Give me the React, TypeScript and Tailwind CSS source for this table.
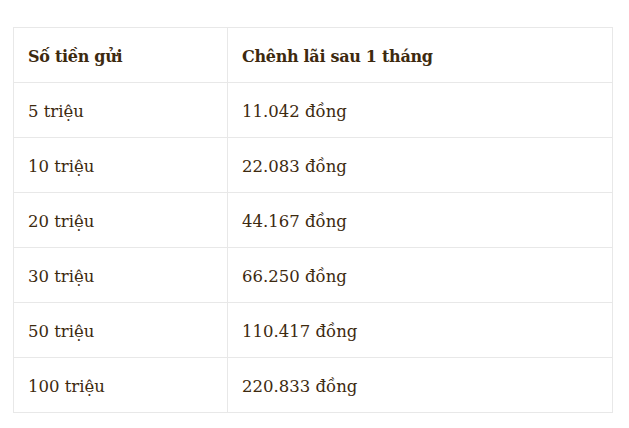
import React from "react";

const rows: [string, string][] = [
  ["5 triệu", "11.042 đồng"],
  ["10 triệu", "22.083 đồng"],
  ["20 triệu", "44.167 đồng"],
  ["30 triệu", "66.250 đồng"],
  ["50 triệu", "110.417 đồng"],
  ["100 triệu", "220.833 đồng"],
];

export default function App() {
  return (
    <div
      className="w-[629px] h-[428px] bg-white overflow-hidden text-[#3d2a0f]"
      style={{ fontFamily: '"DejaVu Serif", "Liberation Serif", serif' }}
    >
      <div className="h-[27px]" />
      <table className="ml-[13px] w-[600px] border-collapse table-fixed">
        <colgroup>
          <col className="w-[214px]" />
          <col />
        </colgroup>
        <thead>
          <tr className="h-[55px]">
            <th className="border border-[#e8e8e8] pl-[14px] pt-[4px] text-left font-bold text-[16px] tracking-[-0.3px]">Số tiền gửi</th>
            <th className="border border-[#e8e8e8] pl-[14px] pt-[4px] text-left font-bold text-[16px] tracking-[-0.3px]">Chênh lãi sau 1 tháng</th>
          </tr>
        </thead>
        <tbody>
          {rows.map(([a, b]) => (
            <tr key={a} className="h-[55px]">
              <td className="border border-[#e8e8e8] pl-[14px] pt-[4px] text-[16.5px]">{a}</td>
              <td className="border border-[#e8e8e8] pl-[14px] pt-[4px] text-[16.5px]">{b}</td>
            </tr>
          ))}
        </tbody>
      </table>
    </div>
  );
}
